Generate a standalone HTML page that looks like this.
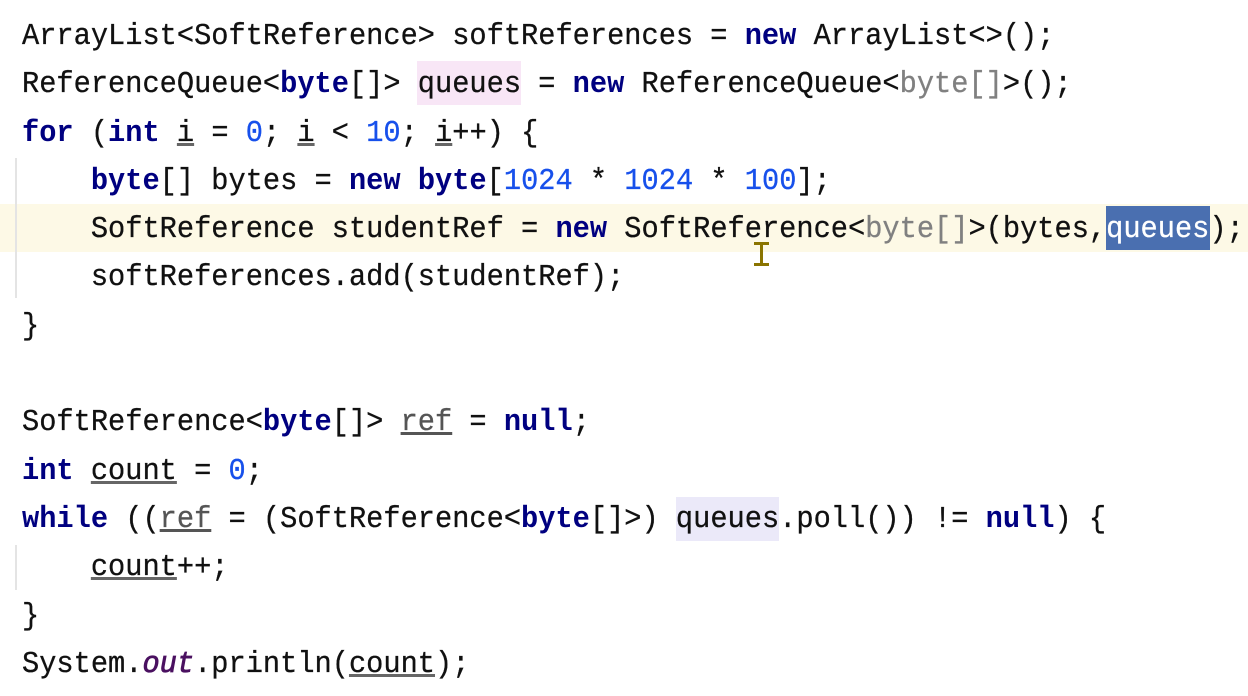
<html><head><style>
body{margin:0;width:1248px;height:696px;background:#fff;overflow:hidden;position:relative}
.c{position:absolute;left:22px;top:13px;font-family:"Liberation Mono",monospace;font-size:31px;line-height:48.3px;color:#111;white-space:pre;transform:scaleX(0.925);transform-origin:0 0;-webkit-text-stroke:0.3px #111}
.k{color:#000080;font-weight:bold;-webkit-text-stroke:0}.n{color:#1750eb;-webkit-text-stroke:0.3px #1750eb}.g{color:#808080;-webkit-text-stroke:0.3px #808080}.u{text-decoration:underline;text-decoration-color:#666}
.v{color:#555;text-decoration:underline;-webkit-text-stroke:0.3px #555}
.hl{position:absolute;left:0;width:1248px;top:204px;height:48px;background:#fdf9e6}
.guide{position:absolute;left:15px;width:2px;background:#e4e4e4}
</style></head><body>
<div class="hl"></div>
<div class="guide" style="top:158px;height:140px"></div>
<div class="guide" style="top:545px;height:45px"></div>
<div style="position:absolute;left:417px;top:61px;width:104px;height:44px;background:#f8e6f6"></div>
<div style="position:absolute;left:676px;top:497px;width:103px;height:44px;background:#ebe9f9"></div>
<div style="position:absolute;left:1106px;top:206px;width:104px;height:44px;background:#4a6fb0"></div>
<div class="c">ArrayList&lt;SoftReference&gt; softReferences = <span class="k">new</span> ArrayList&lt;&gt;();
ReferenceQueue&lt;<span class="k">byte</span>[]&gt; queues = <span class="k">new</span> ReferenceQueue&lt;<span class="g">byte[]</span>&gt;();
<span class="k">for</span> (<span class="k">int</span> <span class="u">i</span> = <span class="n">0</span>; <span class="u">i</span> &lt; <span class="n">10</span>; <span class="u">i</span>++) {
    <span class="k">byte</span>[] bytes = <span class="k">new</span> <span class="k">byte</span>[<span class="n">1024</span> * <span class="n">1024</span> * <span class="n">100</span>];
    SoftReference studentRef = <span class="k">new</span> SoftReference&lt;<span class="g">byte[]</span>&gt;(bytes,<span style="color:#fff;-webkit-text-stroke:0.3px #fff">queues</span>);
    softReferences.add(studentRef);
}

SoftReference&lt;<span class="k">byte</span>[]&gt; <span class="v">ref</span> = <span class="k">null</span>;
<span class="k">int</span> <span class="u">count</span> = <span class="n">0</span>;
<span class="k">while</span> ((<span class="v">ref</span> = (SoftReference&lt;<span class="k">byte</span>[]&gt;) queues.poll()) != <span class="k">null</span>) {
    <span class="u">count</span>++;
}
System.<i style="color:#4a1060;-webkit-text-stroke:0.8px #4a1060">out</i>.println(<span class="u">count</span>);</div>
<div style="position:absolute;left:760px;top:242px;width:3px;height:24px;background:#8a7400"></div>
<div style="position:absolute;left:754px;top:242px;width:15px;height:3px;background:#8a7400"></div>
<div style="position:absolute;left:754px;top:263px;width:15px;height:3px;background:#8a7400"></div>
</body></html>
